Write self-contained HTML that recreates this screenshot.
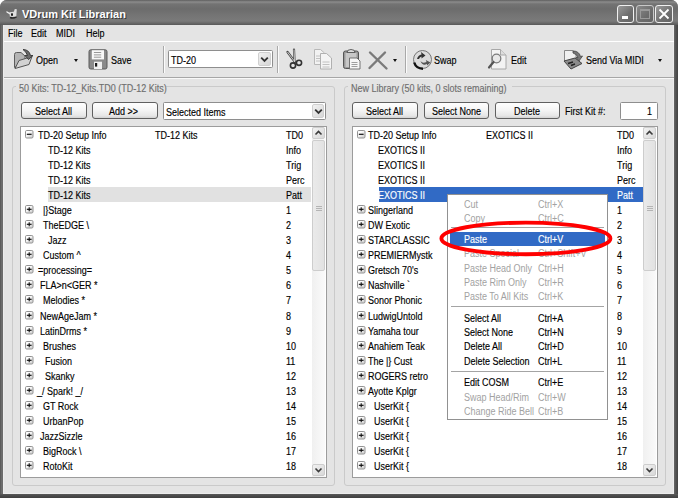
<!DOCTYPE html>
<html><head><meta charset="utf-8"><style>
*{box-sizing:border-box;margin:0;padding:0}
html,body{width:678px;height:498px;overflow:hidden;background:#fff}
body{position:relative;font-family:"Liberation Sans",sans-serif;font-size:10px;color:#000}
div,svg{position:absolute}
.t,.mt{white-space:pre;line-height:14px;height:14px;color:#000;transform:scaleX(0.9);transform-origin:0 0;-webkit-text-stroke:0.15px currentColor}
.w{color:#fff}
.exp{width:9px;height:9px;border:1px solid #9c9c9c;background:linear-gradient(135deg,#fff 30%,#cfcfcf)}
.exp:before{content:"";position:absolute;left:1px;top:3px;width:5px;height:1px;background:#222}
.plus:after{content:"";position:absolute;left:3px;top:1px;width:1px;height:5px;background:#222}
.sel{height:15px;background:#e1e1e1}
.selb{height:15px;background:#316ac5}
.gb{border:1px solid #cacaca;border-radius:3px}
.gl{background:#e4e4e4;width:auto}
.g{color:#6f6f6f}
.btn{height:17px;border:1px solid #606060;border-radius:3px;background:linear-gradient(#fefefe,#f4f4f4 50%,#e6e6e6 85%,#d2d2d2)}
.lb{background:#fff;border:1px solid #9c9c9c}
.cb{background:#fff;border:1px solid #8e8e8e;border-radius:1.5px}
.cbb{border-radius:2px;background:linear-gradient(135deg,#f2f2f2,#d6d6d6);border:1px solid #d0d0d0}
.sb{width:13px;background:linear-gradient(90deg,#f0f0f0,#fafafa)}
.sbtn{width:13px;height:12px;border:1px solid #cdcdcd;border-radius:2px;background:linear-gradient(135deg,#f2f2f2,#d8d8d8)}
.sbtn svg{position:absolute;left:-1px;top:-1px}
.thumb{width:13px;border:1px solid #cdcdcd;border-radius:2px;background:linear-gradient(90deg,#eaeaea,#e2e2e2)}
.grip{left:3px;width:6px;height:5px;border-top:1px solid #b4b4b4;border-bottom:1px solid #b4b4b4}
.grip:before{content:"";position:absolute;left:0;top:1px;width:6px;height:1px;background:#b4b4b4}
.menu{left:447px;top:194px;width:161px;height:226px;background:#fff;border:1px solid #919191}
.dis{color:#a2a2a2;-webkit-text-stroke:0}
.mhl{left:450px;width:155px;height:14px;background:#316ac5}
.hl{color:#fff}
.msep{left:451px;width:153px;height:1px;background:#a4a4a4}
.sep{width:2px;border-left:1px solid #a9a9a9;border-right:1px solid #fbfbfb}
.arr{width:0;height:0;border-left:2.5px solid transparent;border-right:2.5px solid transparent;border-top:3px solid #111}
</style></head><body>
<svg width="0" height="0" style="position:absolute"><defs><linearGradient id="eg" x1="0" y1="0" x2="1" y2="1"><stop offset="0.3" stop-color="#fff"/><stop offset="1" stop-color="#c8c8c8"/></linearGradient></defs></svg>
<div style="left:0;top:0;width:678px;height:498px;background:#6c6c6c;border-radius:7px 7px 0 0"></div>
<div style="left:0;top:0;width:678px;height:25px;border-radius:7px 7px 0 0;background:linear-gradient(#5e5e5e 0px,#8c8c8c 2px,#737373 4px,#6c6c6c 9px,#747474 15px,#7a7a7a 21px,#6a6a6a 23px,#585858 25px)"></div>
<div style="left:0;top:25px;width:1px;height:473px;background:#5c5c5c"></div>
<div style="left:674px;top:25px;width:4px;height:473px;background:linear-gradient(90deg,#686868,#585858,#4c4c4c,#444)"></div>
<div style="left:0;top:494px;width:678px;height:4px;background:linear-gradient(#5a5a5a,#4e4e4e,#464646,#404040)"></div>
<div style="left:22px;top:6px;font:bold 11px 'Liberation Sans';color:#fff;white-space:pre;line-height:16px;text-shadow:1px 1px 0 #3a3a3a">VDrum Kit Librarian</div>
<svg width="14" height="12" style="left:5px;top:7px"><path d="M5 10.5 Q8.5 11.8 11.5 9.8" fill="none" stroke="#2a2a2a" stroke-width="1.4"/><path d="M1.5 4 L5.5 6.2 L5 7.5 L1.5 5.5 Z" fill="#f2f2f2"/><path d="M4.5 5.2 L8.8 4.8 L9.8 2 L11.8 2.2 L11.3 9.2 Q8 10.6 4.8 9.6 Z" fill="#dedede"/><ellipse cx="7" cy="7.5" rx="1" ry="1.5" fill="#111"/></svg>
<div style="left:617px;top:5px;width:17px;height:18px;border:1px solid #f0f0f0;border-radius:3px;background:linear-gradient(135deg,#9a9a9a,#6e6e6e 60%,#646464)"><div style="left:4px;top:10px;width:6px;height:3px;background:#fff"></div></div>
<div style="left:636px;top:5px;width:18px;height:18px;border:1px solid #c8c8c8;border-radius:3px;background:linear-gradient(135deg,#8a8a8a,#6c6c6c 60%,#646464)"><div style="left:3px;top:3px;width:10px;height:10px;border:1px solid #9a9a9a;border-top-width:2px"></div></div>
<div style="left:655px;top:5px;width:18px;height:18px;border:1px solid #f0f0f0;border-radius:3px;background:linear-gradient(135deg,#9a9a9a,#6e6e6e 60%,#646464)"><svg width="16" height="16" style="position:absolute;left:0;top:0"><path d="M3.5 3.5 L12.5 12.5 M12.5 3.5 L3.5 12.5" stroke="#fff" stroke-width="1.8"/></svg></div>
<div style="left:3px;top:25px;width:671px;height:469px;background:#e4e4e4;border-left:1px solid #ececec;border-right:1px solid #ececec;border-bottom:1px solid #ececec"></div>
<div class="t" style="left:7.6px;top:27px;">File</div>
<div class="t" style="left:31.3px;top:27px;">Edit</div>
<div class="t" style="left:56.4px;top:27px;">MIDI</div>
<div class="t" style="left:85.8px;top:27px;">Help</div>
<div style="left:4px;top:41px;width:670px;height:1px;background:#fff"></div>
<div style="left:4px;top:77px;width:670px;height:1px;background:#a6a6a6"></div>
<div style="left:4px;top:78px;width:670px;height:1px;background:#f8f8f8"></div>
<svg width="24" height="24" style="left:11px;top:47px">
<path d="M3.5 20.5 V7.5 Q3.5 5.5 5.5 5.5 H10 L14 9 L14 15 Z" fill="#b4b4b4" stroke="#5c5c5c" stroke-width="1"/>
<path d="M4 21.5 L8 13.5 L21 9.5 L18 17.5 L11 19.5 Z" fill="#d2d2d2" stroke="#555" stroke-width="1"/>
<path d="M12 2.5 Q18 2.5 19.5 8.5 L22 8.5 L17.5 12.5 L14 8.5 L16.5 8.5 Q15.5 5 12 2.5 Z" fill="#6a6a6a" stroke="#333" stroke-width="0.9"/>
</svg><svg width="20" height="21" style="left:88px;top:49px">
<rect x="1" y="0.8" width="18" height="19.2" rx="1.8" fill="#8a8a8a" stroke="#5a5a5a"/>
<rect x="3.8" y="1.2" width="12.2" height="9.2" fill="#f8f8f8"/>
<path d="M5.9 3.5 H13.2 M5.9 5.9 H13.2 M5.9 8.2 H13.2" stroke="#8c8c8c" stroke-width="0.9"/>
<rect x="6" y="12.7" width="8" height="7.3" fill="#efefef"/>
<rect x="7" y="14" width="2.2" height="3.6" fill="#1a1a1a"/>
</svg><svg width="20" height="22" style="position:absolute;left:284px;top:48px">
<path d="M3.5 4 L11 14 M10 1.5 L10.5 13.5" stroke="#444" stroke-width="2.2" stroke-linecap="round"/>
<path d="M3.5 4 L11 14 M10 1.5 L10.5 13.5" stroke="#eee" stroke-width="0.8"/>
<circle cx="9" cy="17.5" r="2.6" fill="none" stroke="#333" stroke-width="1.6"/>
<circle cx="15" cy="14.8" r="2.6" fill="none" stroke="#333" stroke-width="1.6"/>
</svg><svg width="22" height="22" style="position:absolute;left:312px;top:48px">
<path d="M2.5 1.5 H8.5 L12.5 5 V16.5 H2.5 Z" fill="#f2f2f2" stroke="#b8b8b8"/>
<path d="M8.5 5.5 H14.5 L19.5 10 V21 H8.5 Z" fill="#f4f4f4" stroke="#b0b0b0"/>
<path d="M4 8 H8 M4 10.5 H8 M4 13 H8 M10.5 14 H17.5 M10.5 16.5 H17.5 M10.5 19 H17.5" stroke="#bbb" stroke-width="0.9"/>
</svg><svg width="20" height="22" style="position:absolute;left:341px;top:48px">
<rect x="2.5" y="3" width="15" height="17.5" rx="2" fill="#9a9a9a" stroke="#555" stroke-width="1"/>
<path d="M6 4.5 Q6 1.5 10 1.5 Q14 1.5 14 4.5 Z" fill="#ddd" stroke="#555" stroke-width="0.9"/>
<rect x="4.5" y="5" width="11" height="14" fill="#c8c8c8"/>
<path d="M8.5 10 H16 L19 13 V21 H8.5 Z" fill="#f6f6f6" stroke="#666" stroke-width="0.9"/>
<path d="M10.5 14.5 H16.5 M10.5 16.5 H16.5 M10.5 18.5 H16.5" stroke="#888" stroke-width="0.8"/>
</svg><svg width="34" height="22" style="position:absolute;left:366px;top:49px">
<path d="M4 3.5 L20.5 19.5 M19 3.5 L3.5 19" stroke="#7a7a7a" stroke-width="2.4" stroke-linecap="round"/>
</svg><svg width="22" height="22" style="left:412px;top:49px">
<circle cx="10.5" cy="10.5" r="9" fill="#dcdcdc" stroke="#6a6a6a" stroke-width="0.9"/>
<path d="M2.2 13.5 Q4 19.5 11 19.8" fill="none" stroke="#111" stroke-width="2.4"/>
<path d="M5 10 Q6 6 9.5 5.5 L9 3 L13.5 6.5 L9.5 9.5 L9.5 7.5 Q7.5 8 7 10 Z" fill="#333"/>
<path d="M8.5 12 Q10.5 15 14.5 13 L13.8 11 L18.5 13.5 L15 16.5 L15 15 Q10.5 17.5 8.5 12 Z" fill="#555"/>
</svg><svg width="22" height="22" style="position:absolute;left:487px;top:48px">
<path d="M4.5 1.5 H13.5 L19 7 V21 H4.5 Z" fill="#f3f3f3" stroke="#a8a8a8"/>
<path d="M13.5 1.5 V7 H19" fill="#ddd" stroke="#a8a8a8"/>
<circle cx="9.5" cy="10.5" r="4.3" fill="#e8e8e8" stroke="#7a7a7a" stroke-width="1.3"/>
<path d="M6.5 14 L2 19.5" stroke="#555" stroke-width="2.2" stroke-linecap="round"/>
</svg><svg width="24" height="22" style="position:absolute;left:561px;top:48px">
<path d="M3.5 2.5 H12 L15 5.5 V13 H3.5 Z" fill="#f0f0f0" stroke="#888"/>
<path d="M3 13 L14 10 L21 15.5 L10 21 Z" fill="#8c8c8c" stroke="#444"/>
<path d="M7 15.5 L12 14 M10 17.5 L14 16" stroke="#222" stroke-width="1.6"/>
<path d="M12 3 Q18 3 19.5 8.5 L21.5 8 L18 13 L15 9.5 L17 9.5 Q16 6 12 5 Z" fill="#777" stroke="#444" stroke-width="0.8"/>
</svg>
<div class="t" style="left:36.4px;top:54px;">Open</div>
<div class="arr" style="left:73.5px;top:59px"></div>
<div class="t" style="left:110.7px;top:54px;">Save</div>
<div class="arr" style="left:393px;top:59px"></div>
<div class="t" style="left:434px;top:54px;">Swap</div>
<div class="t" style="left:510.5px;top:54px;">Edit</div>
<div class="t" style="left:585.8px;top:54px;">Send Via MIDI</div>
<div class="arr" style="left:658px;top:59px"></div>
<div class="sep" style="left:163px;top:46px;height:27px"></div>
<div class="sep" style="left:277px;top:46px;height:27px"></div>
<div class="sep" style="left:405px;top:46px;height:27px"></div>
<div class="cb" style="left:168px;top:50px;width:105px;height:18px"></div>
<div class="t" style="left:171px;top:54px;">TD-20</div>
<div class="cbb" style="left:258px;top:52px;width:13px;height:14px"><svg width="13" height="14" style="position:absolute;left:-1px;top:-1px"><path d="M3.2 5.6 L6.5 8.9 L9.8 5.6" fill="none" stroke="#333" stroke-width="1.8"/></svg></div>
<div class="gb" style="left:12px;top:86px;width:323px;height:400px"></div>
<div class="gl" style="left:16px;top:83px;width:150px;height:8px"></div>
<div class="t g" style="left:18.6px;top:82px;">50 Kits: TD-12_Kits.TD0 (TD-12 Kits)</div>
<div class="btn" style="left:21px;top:102px;width:66px"></div>
<div class="t" style="left:35px;top:105px;">Select All</div>
<div class="btn" style="left:92px;top:102px;width:66px"></div>
<div class="t" style="left:109px;top:105px;">Add &gt;&gt;</div>
<div class="cb" style="left:163px;top:102px;width:163px;height:18px"></div>
<div class="t" style="left:166px;top:106px;">Selected Items</div>
<div class="cbb" style="left:312px;top:104px;width:12px;height:14px"><svg width="12" height="14" style="position:absolute;left:-1px;top:-1px"><path d="M3.2 5.6 L6.5 8.9 L9.8 5.6" fill="none" stroke="#333" stroke-width="1.8"/></svg></div>
<div class="lb" style="left:20px;top:126px;width:307px;height:352px"></div>
<svg class="ex" width="9" height="9" style="left:25px;top:130px"><rect x="0.5" y="0.5" width="7.5" height="7.5" rx="1.2" fill="url(#eg)" stroke="#929292"/><path d="M1.8 4.3 H6.6" stroke="#111" stroke-width="1.2"/></svg>
<div class="t" style="left:38px;top:129px;">TD-20 Setup Info</div>
<div class="t" style="left:155px;top:129px;">TD-12 Kits</div>
<div class="t" style="left:286px;top:129px;">TD0</div>
<div class="t" style="left:48px;top:144px;">TD-12 Kits</div>
<div class="t" style="left:286px;top:144px;">Info</div>
<div class="t" style="left:48px;top:159px;">TD-12 Kits</div>
<div class="t" style="left:286px;top:159px;">Trig</div>
<div class="t" style="left:48px;top:174px;">TD-12 Kits</div>
<div class="t" style="left:286px;top:174px;">Perc</div>
<div class="sel" style="left:48px;top:187px;width:263px"></div>
<div class="t" style="left:48px;top:189px;">TD-12 Kits</div>
<div class="t" style="left:286px;top:189px;">Patt</div>
<svg class="ex" width="9" height="9" style="left:25px;top:205px"><rect x="0.5" y="0.5" width="7.5" height="7.5" rx="1.2" fill="url(#eg)" stroke="#929292"/><path d="M1.8 4.3 H6.6" stroke="#111" stroke-width="1.2"/><path d="M4.2 2.2 V6.2" stroke="#111" stroke-width="1.1"/></svg>
<div class="t" style="left:43px;top:204px;">|}Stage</div>
<div class="t" style="left:286px;top:204px;">1</div>
<svg class="ex" width="9" height="9" style="left:25px;top:220px"><rect x="0.5" y="0.5" width="7.5" height="7.5" rx="1.2" fill="url(#eg)" stroke="#929292"/><path d="M1.8 4.3 H6.6" stroke="#111" stroke-width="1.2"/><path d="M4.2 2.2 V6.2" stroke="#111" stroke-width="1.1"/></svg>
<div class="t" style="left:43px;top:219px;">TheEDGE \</div>
<div class="t" style="left:286px;top:219px;">2</div>
<svg class="ex" width="9" height="9" style="left:25px;top:235px"><rect x="0.5" y="0.5" width="7.5" height="7.5" rx="1.2" fill="url(#eg)" stroke="#929292"/><path d="M1.8 4.3 H6.6" stroke="#111" stroke-width="1.2"/><path d="M4.2 2.2 V6.2" stroke="#111" stroke-width="1.1"/></svg>
<div class="t" style="left:47.5px;top:234px;">Jazz</div>
<div class="t" style="left:286px;top:234px;">3</div>
<svg class="ex" width="9" height="9" style="left:25px;top:250px"><rect x="0.5" y="0.5" width="7.5" height="7.5" rx="1.2" fill="url(#eg)" stroke="#929292"/><path d="M1.8 4.3 H6.6" stroke="#111" stroke-width="1.2"/><path d="M4.2 2.2 V6.2" stroke="#111" stroke-width="1.1"/></svg>
<div class="t" style="left:43px;top:249px;">Custom ^</div>
<div class="t" style="left:286px;top:249px;">4</div>
<svg class="ex" width="9" height="9" style="left:25px;top:265px"><rect x="0.5" y="0.5" width="7.5" height="7.5" rx="1.2" fill="url(#eg)" stroke="#929292"/><path d="M1.8 4.3 H6.6" stroke="#111" stroke-width="1.2"/><path d="M4.2 2.2 V6.2" stroke="#111" stroke-width="1.1"/></svg>
<div class="t" style="left:37.7px;top:264px;">=processing=</div>
<div class="t" style="left:286px;top:264px;">5</div>
<svg class="ex" width="9" height="9" style="left:25px;top:280px"><rect x="0.5" y="0.5" width="7.5" height="7.5" rx="1.2" fill="url(#eg)" stroke="#929292"/><path d="M1.8 4.3 H6.6" stroke="#111" stroke-width="1.2"/><path d="M4.2 2.2 V6.2" stroke="#111" stroke-width="1.1"/></svg>
<div class="t" style="left:39.7px;top:279px;">FLA&gt;n&lt;GER *</div>
<div class="t" style="left:286px;top:279px;">6</div>
<svg class="ex" width="9" height="9" style="left:25px;top:295px"><rect x="0.5" y="0.5" width="7.5" height="7.5" rx="1.2" fill="url(#eg)" stroke="#929292"/><path d="M1.8 4.3 H6.6" stroke="#111" stroke-width="1.2"/><path d="M4.2 2.2 V6.2" stroke="#111" stroke-width="1.1"/></svg>
<div class="t" style="left:43px;top:294px;">Melodies *</div>
<div class="t" style="left:286px;top:294px;">7</div>
<svg class="ex" width="9" height="9" style="left:25px;top:311px"><rect x="0.5" y="0.5" width="7.5" height="7.5" rx="1.2" fill="url(#eg)" stroke="#929292"/><path d="M1.8 4.3 H6.6" stroke="#111" stroke-width="1.2"/><path d="M4.2 2.2 V6.2" stroke="#111" stroke-width="1.1"/></svg>
<div class="t" style="left:39.7px;top:310px;">NewAgeJam *</div>
<div class="t" style="left:286px;top:310px;">8</div>
<svg class="ex" width="9" height="9" style="left:25px;top:326px"><rect x="0.5" y="0.5" width="7.5" height="7.5" rx="1.2" fill="url(#eg)" stroke="#929292"/><path d="M1.8 4.3 H6.6" stroke="#111" stroke-width="1.2"/><path d="M4.2 2.2 V6.2" stroke="#111" stroke-width="1.1"/></svg>
<div class="t" style="left:39.9px;top:325px;">LatinDrms *</div>
<div class="t" style="left:286px;top:325px;">9</div>
<svg class="ex" width="9" height="9" style="left:25px;top:341px"><rect x="0.5" y="0.5" width="7.5" height="7.5" rx="1.2" fill="url(#eg)" stroke="#929292"/><path d="M1.8 4.3 H6.6" stroke="#111" stroke-width="1.2"/><path d="M4.2 2.2 V6.2" stroke="#111" stroke-width="1.1"/></svg>
<div class="t" style="left:43px;top:340px;">Brushes</div>
<div class="t" style="left:286px;top:340px;">10</div>
<svg class="ex" width="9" height="9" style="left:25px;top:356px"><rect x="0.5" y="0.5" width="7.5" height="7.5" rx="1.2" fill="url(#eg)" stroke="#929292"/><path d="M1.8 4.3 H6.6" stroke="#111" stroke-width="1.2"/><path d="M4.2 2.2 V6.2" stroke="#111" stroke-width="1.1"/></svg>
<div class="t" style="left:44.7px;top:355px;">Fusion</div>
<div class="t" style="left:286px;top:355px;">11</div>
<svg class="ex" width="9" height="9" style="left:25px;top:371px"><rect x="0.5" y="0.5" width="7.5" height="7.5" rx="1.2" fill="url(#eg)" stroke="#929292"/><path d="M1.8 4.3 H6.6" stroke="#111" stroke-width="1.2"/><path d="M4.2 2.2 V6.2" stroke="#111" stroke-width="1.1"/></svg>
<div class="t" style="left:44.7px;top:370px;">Skanky</div>
<div class="t" style="left:286px;top:370px;">12</div>
<svg class="ex" width="9" height="9" style="left:25px;top:386px"><rect x="0.5" y="0.5" width="7.5" height="7.5" rx="1.2" fill="url(#eg)" stroke="#929292"/><path d="M1.8 4.3 H6.6" stroke="#111" stroke-width="1.2"/><path d="M4.2 2.2 V6.2" stroke="#111" stroke-width="1.1"/></svg>
<div class="t" style="left:37.3px;top:385px;">_/ Spark! _/</div>
<div class="t" style="left:286px;top:385px;">13</div>
<svg class="ex" width="9" height="9" style="left:25px;top:401px"><rect x="0.5" y="0.5" width="7.5" height="7.5" rx="1.2" fill="url(#eg)" stroke="#929292"/><path d="M1.8 4.3 H6.6" stroke="#111" stroke-width="1.2"/><path d="M4.2 2.2 V6.2" stroke="#111" stroke-width="1.1"/></svg>
<div class="t" style="left:43px;top:400px;">GT Rock</div>
<div class="t" style="left:286px;top:400px;">14</div>
<svg class="ex" width="9" height="9" style="left:25px;top:416px"><rect x="0.5" y="0.5" width="7.5" height="7.5" rx="1.2" fill="url(#eg)" stroke="#929292"/><path d="M1.8 4.3 H6.6" stroke="#111" stroke-width="1.2"/><path d="M4.2 2.2 V6.2" stroke="#111" stroke-width="1.1"/></svg>
<div class="t" style="left:43px;top:415px;">UrbanPop</div>
<div class="t" style="left:286px;top:415px;">15</div>
<svg class="ex" width="9" height="9" style="left:25px;top:431px"><rect x="0.5" y="0.5" width="7.5" height="7.5" rx="1.2" fill="url(#eg)" stroke="#929292"/><path d="M1.8 4.3 H6.6" stroke="#111" stroke-width="1.2"/><path d="M4.2 2.2 V6.2" stroke="#111" stroke-width="1.1"/></svg>
<div class="t" style="left:39.9px;top:430px;">JazzSizzle</div>
<div class="t" style="left:286px;top:430px;">16</div>
<svg class="ex" width="9" height="9" style="left:25px;top:446px"><rect x="0.5" y="0.5" width="7.5" height="7.5" rx="1.2" fill="url(#eg)" stroke="#929292"/><path d="M1.8 4.3 H6.6" stroke="#111" stroke-width="1.2"/><path d="M4.2 2.2 V6.2" stroke="#111" stroke-width="1.1"/></svg>
<div class="t" style="left:43px;top:445px;">BigRock \</div>
<div class="t" style="left:286px;top:445px;">17</div>
<svg class="ex" width="9" height="9" style="left:25px;top:461px"><rect x="0.5" y="0.5" width="7.5" height="7.5" rx="1.2" fill="url(#eg)" stroke="#929292"/><path d="M1.8 4.3 H6.6" stroke="#111" stroke-width="1.2"/><path d="M4.2 2.2 V6.2" stroke="#111" stroke-width="1.1"/></svg>
<div class="t" style="left:43px;top:460px;">RotoKit</div>
<div class="t" style="left:286px;top:460px;">18</div>
<div class="sb" style="left:312px;top:127px;height:350px"></div>
<div class="sbtn" style="left:312px;top:127px"><svg width="13" height="13"><path d="M3.5 7.5 L6.5 4.5 L9.5 7.5" fill="none" stroke="#3a3a3a" stroke-width="1.6"/></svg></div>
<div class="thumb" style="left:312px;top:140px;height:131px"><div class="grip" style="top:65px"></div></div>
<div class="sbtn" style="left:312px;top:464px"><svg width="13" height="13"><path d="M3.5 4.5 L6.5 7.5 L9.5 4.5" fill="none" stroke="#3a3a3a" stroke-width="1.6"/></svg></div>
<div class="gb" style="left:344px;top:86px;width:322px;height:400px"></div>
<div class="gl" style="left:348px;top:83px;width:164px;height:8px"></div>
<div class="t g" style="left:350.5px;top:82px;">New Library (50 kits, 0 slots remaining)</div>
<div class="btn" style="left:352px;top:102px;width:66px"></div>
<div class="t" style="left:365.5px;top:105px;">Select All</div>
<div class="btn" style="left:424px;top:102px;width:65px"></div>
<div class="t" style="left:431.5px;top:105px;">Select None</div>
<div class="btn" style="left:495px;top:102px;width:65px"></div>
<div class="t" style="left:513.5px;top:105px;">Delete</div>
<div class="t" style="left:565px;top:105px;">First Kit #:</div>
<div class="cb" style="left:620px;top:102px;width:38px;height:18px"></div>
<div class="t" style="left:647px;top:105px;">1</div>
<div class="lb" style="left:352px;top:126px;width:306px;height:352px"></div>
<svg class="ex" width="9" height="9" style="left:357px;top:130px"><rect x="0.5" y="0.5" width="7.5" height="7.5" rx="1.2" fill="url(#eg)" stroke="#929292"/><path d="M1.8 4.3 H6.6" stroke="#111" stroke-width="1.2"/></svg>
<div class="t" style="left:368px;top:129px;">TD-20 Setup Info</div>
<div class="t" style="left:486px;top:129px;">EXOTICS II</div>
<div class="t" style="left:617.3px;top:129px;">TD0</div>
<div class="t" style="left:378px;top:144px;">EXOTICS II</div>
<div class="t" style="left:617.3px;top:144px;">Info</div>
<div class="t" style="left:378px;top:159px;">EXOTICS II</div>
<div class="t" style="left:617.3px;top:159px;">Trig</div>
<div class="t" style="left:378px;top:174px;">EXOTICS II</div>
<div class="t" style="left:617.3px;top:174px;">Perc</div>
<div class="selb" style="left:379px;top:187px;width:264px"></div>
<div class="t w" style="left:378px;top:189px;">EXOTICS II</div>
<div class="t w" style="left:617.3px;top:189px;">Patt</div>
<svg class="ex" width="9" height="9" style="left:357px;top:205px"><rect x="0.5" y="0.5" width="7.5" height="7.5" rx="1.2" fill="url(#eg)" stroke="#929292"/><path d="M1.8 4.3 H6.6" stroke="#111" stroke-width="1.2"/><path d="M4.2 2.2 V6.2" stroke="#111" stroke-width="1.1"/></svg>
<div class="t" style="left:368px;top:204px;">Slingerland</div>
<div class="t" style="left:617.3px;top:204px;">1</div>
<svg class="ex" width="9" height="9" style="left:357px;top:220px"><rect x="0.5" y="0.5" width="7.5" height="7.5" rx="1.2" fill="url(#eg)" stroke="#929292"/><path d="M1.8 4.3 H6.6" stroke="#111" stroke-width="1.2"/><path d="M4.2 2.2 V6.2" stroke="#111" stroke-width="1.1"/></svg>
<div class="t" style="left:368px;top:219px;">DW Exotic</div>
<div class="t" style="left:617.3px;top:219px;">2</div>
<svg class="ex" width="9" height="9" style="left:357px;top:235px"><rect x="0.5" y="0.5" width="7.5" height="7.5" rx="1.2" fill="url(#eg)" stroke="#929292"/><path d="M1.8 4.3 H6.6" stroke="#111" stroke-width="1.2"/><path d="M4.2 2.2 V6.2" stroke="#111" stroke-width="1.1"/></svg>
<div class="t" style="left:368px;top:234px;">STARCLASSIC</div>
<div class="t" style="left:617.3px;top:234px;">3</div>
<svg class="ex" width="9" height="9" style="left:357px;top:250px"><rect x="0.5" y="0.5" width="7.5" height="7.5" rx="1.2" fill="url(#eg)" stroke="#929292"/><path d="M1.8 4.3 H6.6" stroke="#111" stroke-width="1.2"/><path d="M4.2 2.2 V6.2" stroke="#111" stroke-width="1.1"/></svg>
<div class="t" style="left:368px;top:249px;">PREMIERMystk</div>
<div class="t" style="left:617.3px;top:249px;">4</div>
<svg class="ex" width="9" height="9" style="left:357px;top:265px"><rect x="0.5" y="0.5" width="7.5" height="7.5" rx="1.2" fill="url(#eg)" stroke="#929292"/><path d="M1.8 4.3 H6.6" stroke="#111" stroke-width="1.2"/><path d="M4.2 2.2 V6.2" stroke="#111" stroke-width="1.1"/></svg>
<div class="t" style="left:368px;top:264px;">Gretsch 70's</div>
<div class="t" style="left:617.3px;top:264px;">5</div>
<svg class="ex" width="9" height="9" style="left:357px;top:280px"><rect x="0.5" y="0.5" width="7.5" height="7.5" rx="1.2" fill="url(#eg)" stroke="#929292"/><path d="M1.8 4.3 H6.6" stroke="#111" stroke-width="1.2"/><path d="M4.2 2.2 V6.2" stroke="#111" stroke-width="1.1"/></svg>
<div class="t" style="left:368px;top:279px;">Nashville `</div>
<div class="t" style="left:617.3px;top:279px;">6</div>
<svg class="ex" width="9" height="9" style="left:357px;top:295px"><rect x="0.5" y="0.5" width="7.5" height="7.5" rx="1.2" fill="url(#eg)" stroke="#929292"/><path d="M1.8 4.3 H6.6" stroke="#111" stroke-width="1.2"/><path d="M4.2 2.2 V6.2" stroke="#111" stroke-width="1.1"/></svg>
<div class="t" style="left:368px;top:294px;">Sonor Phonic</div>
<div class="t" style="left:617.3px;top:294px;">7</div>
<svg class="ex" width="9" height="9" style="left:357px;top:311px"><rect x="0.5" y="0.5" width="7.5" height="7.5" rx="1.2" fill="url(#eg)" stroke="#929292"/><path d="M1.8 4.3 H6.6" stroke="#111" stroke-width="1.2"/><path d="M4.2 2.2 V6.2" stroke="#111" stroke-width="1.1"/></svg>
<div class="t" style="left:368px;top:310px;">LudwigUntold</div>
<div class="t" style="left:617.3px;top:310px;">8</div>
<svg class="ex" width="9" height="9" style="left:357px;top:326px"><rect x="0.5" y="0.5" width="7.5" height="7.5" rx="1.2" fill="url(#eg)" stroke="#929292"/><path d="M1.8 4.3 H6.6" stroke="#111" stroke-width="1.2"/><path d="M4.2 2.2 V6.2" stroke="#111" stroke-width="1.1"/></svg>
<div class="t" style="left:368px;top:325px;">Yamaha tour</div>
<div class="t" style="left:617.3px;top:325px;">9</div>
<svg class="ex" width="9" height="9" style="left:357px;top:341px"><rect x="0.5" y="0.5" width="7.5" height="7.5" rx="1.2" fill="url(#eg)" stroke="#929292"/><path d="M1.8 4.3 H6.6" stroke="#111" stroke-width="1.2"/><path d="M4.2 2.2 V6.2" stroke="#111" stroke-width="1.1"/></svg>
<div class="t" style="left:368px;top:340px;">Anahiem Teak</div>
<div class="t" style="left:617.3px;top:340px;">10</div>
<svg class="ex" width="9" height="9" style="left:357px;top:356px"><rect x="0.5" y="0.5" width="7.5" height="7.5" rx="1.2" fill="url(#eg)" stroke="#929292"/><path d="M1.8 4.3 H6.6" stroke="#111" stroke-width="1.2"/><path d="M4.2 2.2 V6.2" stroke="#111" stroke-width="1.1"/></svg>
<div class="t" style="left:368px;top:355px;">The |} Cust</div>
<div class="t" style="left:617.3px;top:355px;">11</div>
<svg class="ex" width="9" height="9" style="left:357px;top:371px"><rect x="0.5" y="0.5" width="7.5" height="7.5" rx="1.2" fill="url(#eg)" stroke="#929292"/><path d="M1.8 4.3 H6.6" stroke="#111" stroke-width="1.2"/><path d="M4.2 2.2 V6.2" stroke="#111" stroke-width="1.1"/></svg>
<div class="t" style="left:368px;top:370px;">ROGERS retro</div>
<div class="t" style="left:617.3px;top:370px;">12</div>
<svg class="ex" width="9" height="9" style="left:357px;top:386px"><rect x="0.5" y="0.5" width="7.5" height="7.5" rx="1.2" fill="url(#eg)" stroke="#929292"/><path d="M1.8 4.3 H6.6" stroke="#111" stroke-width="1.2"/><path d="M4.2 2.2 V6.2" stroke="#111" stroke-width="1.1"/></svg>
<div class="t" style="left:368px;top:385px;">Ayotte Kplgr</div>
<div class="t" style="left:617.3px;top:385px;">13</div>
<svg class="ex" width="9" height="9" style="left:357px;top:401px"><rect x="0.5" y="0.5" width="7.5" height="7.5" rx="1.2" fill="url(#eg)" stroke="#929292"/><path d="M1.8 4.3 H6.6" stroke="#111" stroke-width="1.2"/><path d="M4.2 2.2 V6.2" stroke="#111" stroke-width="1.1"/></svg>
<div class="t" style="left:373.5px;top:400px;">UserKit {</div>
<div class="t" style="left:617.3px;top:400px;">14</div>
<svg class="ex" width="9" height="9" style="left:357px;top:416px"><rect x="0.5" y="0.5" width="7.5" height="7.5" rx="1.2" fill="url(#eg)" stroke="#929292"/><path d="M1.8 4.3 H6.6" stroke="#111" stroke-width="1.2"/><path d="M4.2 2.2 V6.2" stroke="#111" stroke-width="1.1"/></svg>
<div class="t" style="left:373.5px;top:415px;">UserKit {</div>
<div class="t" style="left:617.3px;top:415px;">15</div>
<svg class="ex" width="9" height="9" style="left:357px;top:431px"><rect x="0.5" y="0.5" width="7.5" height="7.5" rx="1.2" fill="url(#eg)" stroke="#929292"/><path d="M1.8 4.3 H6.6" stroke="#111" stroke-width="1.2"/><path d="M4.2 2.2 V6.2" stroke="#111" stroke-width="1.1"/></svg>
<div class="t" style="left:373.5px;top:430px;">UserKit {</div>
<div class="t" style="left:617.3px;top:430px;">16</div>
<svg class="ex" width="9" height="9" style="left:357px;top:446px"><rect x="0.5" y="0.5" width="7.5" height="7.5" rx="1.2" fill="url(#eg)" stroke="#929292"/><path d="M1.8 4.3 H6.6" stroke="#111" stroke-width="1.2"/><path d="M4.2 2.2 V6.2" stroke="#111" stroke-width="1.1"/></svg>
<div class="t" style="left:373.5px;top:445px;">UserKit {</div>
<div class="t" style="left:617.3px;top:445px;">17</div>
<svg class="ex" width="9" height="9" style="left:357px;top:461px"><rect x="0.5" y="0.5" width="7.5" height="7.5" rx="1.2" fill="url(#eg)" stroke="#929292"/><path d="M1.8 4.3 H6.6" stroke="#111" stroke-width="1.2"/><path d="M4.2 2.2 V6.2" stroke="#111" stroke-width="1.1"/></svg>
<div class="t" style="left:373.5px;top:460px;">UserKit {</div>
<div class="t" style="left:617.3px;top:460px;">18</div>
<div class="sb" style="left:643px;top:127px;height:350px"></div>
<div class="sbtn" style="left:643px;top:127px"><svg width="13" height="13"><path d="M3.5 7.5 L6.5 4.5 L9.5 7.5" fill="none" stroke="#3a3a3a" stroke-width="1.6"/></svg></div>
<div class="thumb" style="left:643px;top:140px;height:131px"><div class="grip" style="top:65px"></div></div>
<div class="sbtn" style="left:643px;top:464px"><svg width="13" height="13"><path d="M3.5 4.5 L6.5 7.5 L9.5 4.5" fill="none" stroke="#3a3a3a" stroke-width="1.6"/></svg></div>
<div class="menu"></div>
<div class="mt dis" style="left:463.8px;top:198px;">Cut</div>
<div class="mt dis" style="left:537.7px;top:198px;">Ctrl+X</div>
<div class="mt dis" style="left:463.8px;top:212px;">Copy</div>
<div class="mt dis" style="left:537.7px;top:212px;">Ctrl+C</div>
<div class="msep" style="top:227px"></div>
<div class="mhl" style="top:232px"></div>
<div class="mt hl" style="left:463.8px;top:233px;">Paste</div>
<div class="mt hl" style="left:537.7px;top:233px;">Ctrl+V</div>
<div class="mt dis" style="left:463.8px;top:247px;">Paste Special</div>
<div class="mt dis" style="left:537.7px;top:247px;">Ctrl+Shift+V</div>
<div class="mt dis" style="left:463.8px;top:262px;">Paste Head Only</div>
<div class="mt dis" style="left:537.7px;top:262px;">Ctrl+H</div>
<div class="mt dis" style="left:463.8px;top:276px;">Paste Rim Only</div>
<div class="mt dis" style="left:537.7px;top:276px;">Ctrl+R</div>
<div class="mt dis" style="left:463.8px;top:290px;">Paste To All Kits</div>
<div class="mt dis" style="left:537.7px;top:290px;">Ctrl+K</div>
<div class="msep" style="top:306px"></div>
<div class="mt " style="left:463.8px;top:312px;">Select All</div>
<div class="mt " style="left:537.7px;top:312px;">Ctrl+A</div>
<div class="mt " style="left:463.8px;top:326px;">Select None</div>
<div class="mt " style="left:537.7px;top:326px;">Ctrl+N</div>
<div class="mt " style="left:463.8px;top:340px;">Delete All</div>
<div class="mt " style="left:537.7px;top:340px;">Ctrl+D</div>
<div class="mt " style="left:463.8px;top:355px;">Delete Selection</div>
<div class="mt " style="left:537.7px;top:355px;">Ctrl+L</div>
<div class="msep" style="top:371px"></div>
<div class="mt " style="left:463.8px;top:376px;">Edit COSM</div>
<div class="mt " style="left:537.7px;top:376px;">Ctrl+E</div>
<div class="mt dis" style="left:463.8px;top:391px;">Swap Head/Rim</div>
<div class="mt dis" style="left:537.7px;top:391px;">Ctrl+W</div>
<div class="mt dis" style="left:463.8px;top:405px;">Change Ride Bell</div>
<div class="mt dis" style="left:537.7px;top:405px;">Ctrl+B</div>
<svg width="678" height="498" style="position:absolute;left:0;top:0"><ellipse cx="525.9" cy="238.4" rx="84.5" ry="15.8" fill="none" stroke="#ff0000" stroke-width="3.9"/></svg>
</body></html>
